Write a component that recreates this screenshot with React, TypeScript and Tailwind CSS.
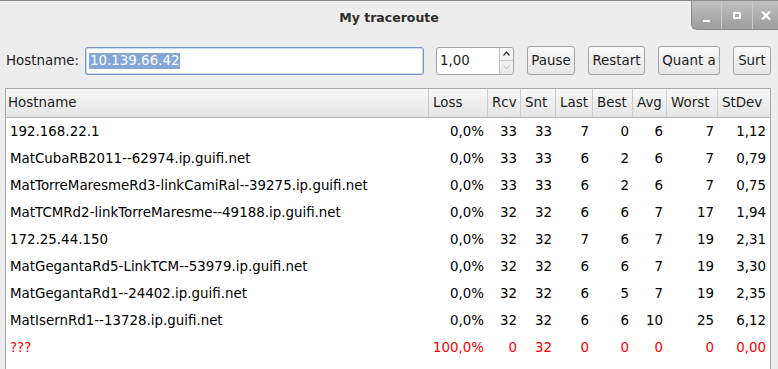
import React from "react";

type Hop = {
  host: string;
  loss: string;
  rcv: string;
  snt: string;
  last: string;
  best: string;
  avg: string;
  worst: string;
  stdev: string;
  bad?: boolean;
};

const hops: Hop[] = [
  { host: "192.168.22.1", loss: "0,0%", rcv: "33", snt: "33", last: "7", best: "0", avg: "6", worst: "7", stdev: "1,12" },
  { host: "MatCubaRB2011--62974.ip.guifi.net", loss: "0,0%", rcv: "33", snt: "33", last: "6", best: "2", avg: "6", worst: "7", stdev: "0,79" },
  { host: "MatTorreMaresmeRd3-linkCamiRal--39275.ip.guifi.net", loss: "0,0%", rcv: "33", snt: "33", last: "6", best: "2", avg: "6", worst: "7", stdev: "0,75" },
  { host: "MatTCMRd2-linkTorreMaresme--49188.ip.guifi.net", loss: "0,0%", rcv: "32", snt: "32", last: "6", best: "6", avg: "7", worst: "17", stdev: "1,94" },
  { host: "172.25.44.150", loss: "0,0%", rcv: "32", snt: "32", last: "7", best: "6", avg: "7", worst: "19", stdev: "2,31" },
  { host: "MatGegantaRd5-LinkTCM--53979.ip.guifi.net", loss: "0,0%", rcv: "32", snt: "32", last: "6", best: "6", avg: "7", worst: "19", stdev: "3,30" },
  { host: "MatGegantaRd1--24402.ip.guifi.net", loss: "0,0%", rcv: "32", snt: "32", last: "6", best: "5", avg: "7", worst: "19", stdev: "2,35" },
  { host: "MatIsernRd1--13728.ip.guifi.net", loss: "0,0%", rcv: "32", snt: "32", last: "6", best: "6", avg: "10", worst: "25", stdev: "6,12" },
  { host: "???", loss: "100,0%", rcv: "0", snt: "32", last: "0", best: "0", avg: "0", worst: "0", stdev: "0,00", bad: true },
];

// column widths measured off the header separators
const cols = "grid grid-cols-[423px_59px_33px_35px_37px_40px_34px_51px_52px]";

const headers = ["Hostname", "Loss", "Rcv", "Snt", "Last", "Best", "Avg", "Worst", "StDev"];

const Button = ({ label, w }: { label: string; w: string }) => (
  <button
    className={`${w} h-[29px] ml-[13px] pt-[2px] rounded-[3px] border border-[#a3a3a3] bg-gradient-to-b from-[#fafafa] to-[#e6e6e6] text-[#1c1c1c] flex items-center justify-center whitespace-nowrap`}
  >
    {label}
  </button>
);

export default function App() {
  return (
    <div className="w-[778px] h-[369px] overflow-hidden bg-[#ededed] border-t border-[#8a8a8a] font-['DejaVu_Sans',sans-serif] text-[13.4px] text-[#1c1c1c] flex flex-col">
      {/* title bar */}
      <div className="relative h-[35px] flex items-center justify-center">
        <span className="font-bold text-[12.5px] text-[#2e2e2e]">My traceroute</span>
        <div className="absolute top-0 right-0 h-[29px] w-[87px] flex rounded-bl-[6px] border-l border-b border-[#8a8a8a] bg-gradient-to-b from-[#c0c0c0] to-[#9c9c9c] overflow-hidden">
          <div className="w-[30px] flex items-end justify-center pb-[7px] border-r border-[#c9c9c9]">
            <div className="w-[7px] h-[2px] bg-white" />
          </div>
          <div className="w-[31px] flex items-center justify-center border-r border-[#c9c9c9]">
            <div className="w-[8px] h-[7px] border-2 border-white" />
          </div>
          <div className="flex-1 flex items-center justify-center">
            <svg width="10" height="9" viewBox="0 0 10 9">
              <path d="M1 0.5 L9 8.5 M9 0.5 L1 8.5" stroke="white" strokeWidth="2.2" />
            </svg>
          </div>
        </div>
      </div>

      {/* toolbar */}
      <div className="mt-[10px] h-[29px] flex items-center pl-[6px]">
        <span className="w-[79px] pt-[2px]">Hostname:</span>
        <div className="w-[339px] h-[28px] rounded-[3px] border border-[#7398cb] bg-white flex items-center pl-[3px] pt-[1px] shadow-[inset_0_0_0_1px_#c8d8ee]">
          <span className="bg-[#84a7d8] text-white px-[1px] leading-[16px]">10.139.66.42</span>
        </div>
        <div className="ml-[12px] w-[78px] h-[28px] rounded-[3px] border border-[#a3a3a3] bg-white flex">
          <span className="flex-1 flex items-center pl-[3px] pt-[2px]">1,00</span>
          <div className="w-[14px] flex flex-col border-l border-[#c4c4c4] bg-gradient-to-b from-[#fafafa] to-[#e9e9e9] rounded-r-[3px]">
            <div className="flex-1 flex items-center justify-center border-b border-[#c4c4c4]">
              <svg width="7" height="5" viewBox="0 0 7 5">
                <path d="M0.5 4.5 L3.5 1 L6.5 4.5" stroke="#333" strokeWidth="1.2" fill="none" />
              </svg>
            </div>
            <div className="flex-1 flex items-center justify-center">
              <svg width="7" height="5" viewBox="0 0 7 5">
                <path d="M0.5 0.5 L3.5 4 L6.5 0.5" stroke="#b8b8b8" strokeWidth="1" fill="none" />
              </svg>
            </div>
          </div>
        </div>
        <Button label="Pause" w="w-[48px]" />
        <Button label="Restart" w="w-[57px]" />
        <Button label="Quant a" w="w-[62px]" />
        <Button label="Surt" w="w-[38px]" />
      </div>

      {/* table */}
      <div className="mt-[13px] ml-[5px] w-[766px] flex-1 border border-b-0 border-[#a8a8a8] bg-white">
        <div className={`${cols} h-[29px] border-b border-[#b4b4b4] bg-gradient-to-b from-[#f8f8f8] to-[#e5e5e5]`}>
          {headers.map((h, i) => (
            <div
              key={h}
              className={`flex items-center pt-[1px] whitespace-nowrap ${i < headers.length - 1 ? "border-r border-[#cdcdcd]" : ""} ${i > 0 ? "pl-[4px]" : "pl-[2px]"}`}
            >
              {h}
            </div>
          ))}
        </div>
        {hops.map((r) => {
          const vals = [r.loss, r.rcv, r.snt, r.last, r.best, r.avg, r.worst, r.stdev];
          return (
            <div key={r.host} className={`${cols} h-[27px] pt-[1px] ${r.bad ? "text-[#ff0000]" : "text-black"}`}>
              <div className="flex items-center pl-[4px] whitespace-nowrap">{r.host}</div>
              {vals.map((v, i) => (
                <div key={i} className="flex items-center justify-end pr-[4px]">
                  {v}
                </div>
              ))}
            </div>
          );
        })}
      </div>
    </div>
  );
}
